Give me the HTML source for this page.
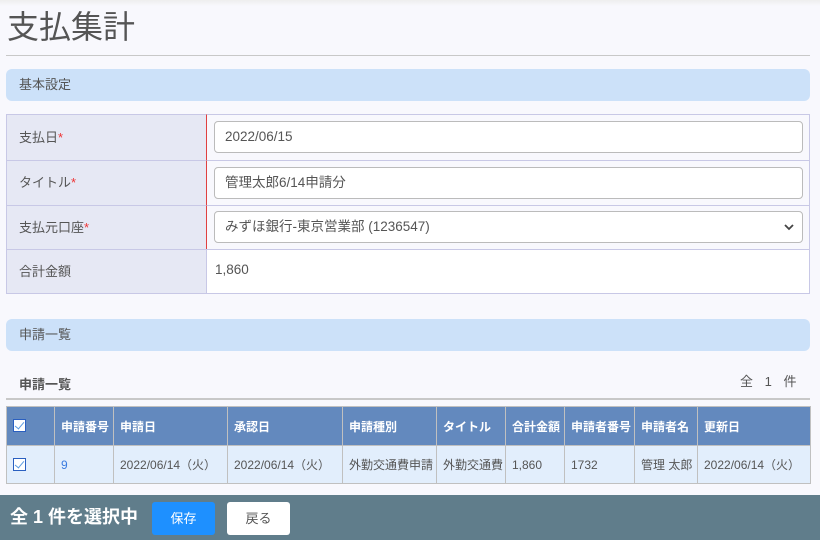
<!DOCTYPE html>
<html><head><meta charset="utf-8"><style>
*{box-sizing:border-box;margin:0;padding:0}
body{width:820px;height:540px;overflow:hidden;background:#f8f8fd;font-family:"Liberation Sans","Noto Sans CJK JP",sans-serif;color:#555;font-size:13px;position:relative}
.a{position:absolute}
.bar{position:absolute;left:6px;width:804px;height:32px;background:#cce1f9;border-radius:6px;padding-left:13px;line-height:32px;font-size:13px;color:#555}
.lbl{position:absolute;left:6px;width:201px;background:#e6e8f4;border:1px solid #c8c8e6;padding-left:12px;font-size:13px}
.val{position:absolute;left:207px;width:603px;border:1px solid #c8c8e6;border-left:none}
.inp{position:absolute;left:214px;width:589px;height:32px;background:#fff;border:1px solid #bbb;border-radius:4px;padding-left:10px;line-height:30px;font-size:13.5px;color:#555}
.red{color:#e33}
table{position:absolute;left:6px;top:406px;border-collapse:collapse;font-size:12px}
th{background:#6389be;color:#fff;height:39px;text-align:left;padding-left:6px;border:1px solid #c0c0c0;font-weight:bold}
td{background:#e2eefc;height:38px;padding-left:6px;border:1px solid #c0c0c0;color:#555}
.cb{display:inline-block;width:13px;height:13px;border:1.5px solid #2a5fc0;background:#fff;position:relative;top:1px}
.cb:after{content:"";position:absolute;left:3px;top:0px;width:4px;height:8px;border:solid #5b9be0;border-width:0 1.5px 1.5px 0;transform:rotate(40deg)}
</style></head><body>
<div class="a" style="left:0;top:0;width:820px;height:6px;background:linear-gradient(#eee,#f8f8fd)"></div>
<div class="a" style="left:7px;top:5px;font-size:32px;color:#555;line-height:44px">支払集計</div>
<div class="a" style="left:6px;top:55px;width:804px;height:1px;background:#c8c8c8"></div>
<div class="bar" style="top:69px">基本設定</div>

<div class="lbl" style="top:114px;height:47px;line-height:45px">支払日<span class="red">*</span></div>
<div class="val" style="top:114px;height:47px;border-left:1px solid #e04040;left:206px;width:604px"></div>
<div class="inp" style="top:121px">2022/06/15</div>
<div class="lbl" style="top:160px;height:46px;line-height:44px">タイトル<span class="red">*</span></div>
<div class="val" style="top:160px;height:46px;border-left:1px solid #e04040;left:206px;width:604px"></div>
<div class="inp" style="top:167px">管理太郎6/14申請分</div>
<div class="lbl" style="top:205px;height:45px;line-height:43px">支払元口座<span class="red">*</span></div>
<div class="val" style="top:205px;height:45px;border-left:1px solid #e04040;left:206px;width:604px"></div>
<div class="inp" style="top:211px">みずほ銀行-東京営業部 (1236547)<svg class="a" style="right:8px;top:11px" width="10" height="8" viewBox="0 0 10 8"><path d="M1 2l4 4 4-4" stroke="#444" stroke-width="1.8" fill="none"/></svg></div>
<div class="lbl" style="top:249px;height:45px;line-height:43px">合計金額</div>
<div class="val" style="top:249px;height:45px;background:#fff"></div>
<div class="a" style="left:215px;top:262px;font-size:13.5px">1,860</div>

<div class="bar" style="top:319px">申請一覧</div>
<div class="a" style="left:19px;top:374px;font-weight:bold;font-size:13px">申請一覧</div>
<div class="a" style="left:740px;top:371px;font-size:13px;word-spacing:8px">全 1 件</div>
<div class="a" style="left:6px;top:398px;width:804px;height:2px;background:#c8c8c8"></div>

<table>
<tr><th style="width:48px"><span class="cb"></span></th><th style="width:59px">申請番号</th><th style="width:114px">申請日</th><th style="width:115px">承認日</th><th style="width:94px">申請種別</th><th style="width:69px">タイトル</th><th style="width:59px">合計金額</th><th style="width:70px">申請者番号</th><th style="width:63px">申請者名</th><th style="width:113px">更新日</th></tr>
<tr><td><span class="cb"></span></td><td style="color:#3a7be0">9</td><td>2022/06/14（火）</td><td>2022/06/14（火）</td><td>外勤交通費申請</td><td>外勤交通費</td><td>1,860</td><td>1732</td><td>管理 太郎</td><td>2022/06/14（火）</td></tr>
</table>

<div class="a" style="left:0;top:495px;width:820px;height:45px;background:#607d8b"></div>
<div class="a" style="left:10px;top:504px;font-size:18px;font-weight:bold;color:#fff;line-height:26px">全 1 件を選択中</div>
<div class="a" style="left:152px;top:502px;width:63px;height:33px;background:#1e90ff;border-radius:3px;color:#fff;text-align:center;line-height:33px;font-size:13px">保存</div>
<div class="a" style="left:227px;top:502px;width:63px;height:33px;background:#fff;border-radius:3px;color:#555;text-align:center;line-height:33px;font-size:13px">戻る</div>
</body></html>
